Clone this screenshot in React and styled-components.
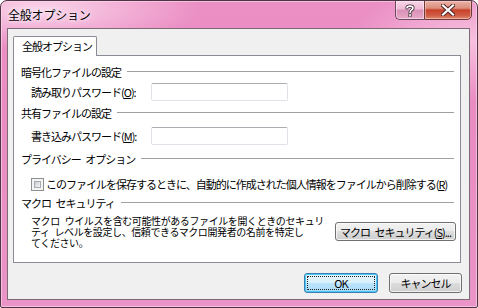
import React from "react";
import styled, { createGlobalStyle } from "styled-components";

const Global = createGlobalStyle`
  html, body { margin: 0; padding: 0; background: #fff; }
  body { font-family: "Noto Sans CJK JP", "Noto Sans", sans-serif; word-spacing: 3px; }
  * { box-sizing: border-box; }
`;

const Window = styled.div`
  width: 478px;
  height: 308px;
  position: relative;
  border: 1px solid #4e3444;
  border-radius: 7px 7px 2px 2px;
  background:
    radial-gradient(ellipse 160px 40px at 40px 8px, rgba(255,235,246,0.75), rgba(255,235,246,0) 100%),
    radial-gradient(ellipse 120px 60px at 470px 40px, rgba(250,205,230,0.8), rgba(250,205,230,0) 100%),
    linear-gradient(180deg, #eb8fc4 0%, #e88cc2 40%, #ea94c7 100%);
  box-shadow: inset 0 0 0 1px rgba(255,220,240,0.6);
  display: flex;
  flex-direction: column;
  overflow: hidden;
`;

const TitleBar = styled.div`
  height: 27px;
  display: flex;
  align-items: flex-start;
  padding-left: 7px;
`;

const Title = styled.div`
  font-size: 12px;
  line-height: 14px;
  margin-top: 7px;
  color: #000;
  letter-spacing: -0.2px;
  text-shadow: 0 0 6px rgba(255,255,255,0.9), 0 0 3px rgba(255,255,255,0.9);
`;

const Caption = styled.div`
  position: absolute;
  top: -1px;
  right: 5px;
  display: flex;
  height: 20px;
`;

const HelpBtn = styled.div`
  width: 29px;
  height: 20px;
  border: 1px solid #6b4a5c;
  border-right: none;
  border-radius: 0 0 0 5px;
  background: linear-gradient(180deg, #f7d5e6 0%, #efb9d5 45%, #d990b6 50%, #e7a9c9 100%);
  box-shadow: inset 0 0 0 1px rgba(255,255,255,0.45);
  display: flex;
  align-items: center;
  justify-content: center;
`;

const CloseBtn = styled.div`
  width: 48px;
  height: 20px;
  border: 1px solid #6b3a3a;
  border-radius: 0 0 5px 0;
  background: linear-gradient(180deg, #eab2a6 0%, #dc8d7c 40%, #c8412a 50%, #cf5c45 80%, #e08a72 100%);
  box-shadow: inset 0 0 0 1px rgba(255,220,210,0.5);
  display: flex;
  align-items: center;
  justify-content: center;
`;

const Client = styled.div`
  flex: 1;
  margin: 0 7px 7px 6px;
  background: #f0f0f0;
  border: 1px solid #7d6a76;
  display: flex;
  flex-direction: column;
  padding: 7px 7px 0 5px;
`;

const TabStrip = styled.div`
  display: flex;
  height: 20px;
  position: relative;
  z-index: 1;
`;

const Tab = styled.div`
  width: 84px;
  height: 20px;
  background: #fff;
  border: 1px solid #898c95;
  border-bottom: none;
  border-radius: 2px 2px 0 0;
  font-size: 11px;
  letter-spacing: -1px;
  line-height: 18px;
  padding-left: 8px;
  color: #000;
`;

const Panel = styled.div`
  width: 448px;
  height: 208px;
  margin-top: -1px;
  background: #fff;
  border: 1px solid #898c95;
  padding: 0 6px 0 7px;
  display: flex;
  flex-direction: column;
`;

const Text = styled.span`
  font-size: 11px;
  letter-spacing: -1px;
  color: #000;
  white-space: nowrap;
`;

const Header = styled.div`
  display: flex;
  align-items: center;
  height: 14px;
  margin-top: ${p => p.$mt}px;
  font-size: 11px;
  letter-spacing: -1px;
  white-space: nowrap;
  &::after {
    content: "";
    flex: 1;
    border-top: 1px solid #a0a0a0;
    margin-left: 6px;
    margin-top: -1px;
  }
`;

const FieldRow = styled.div`
  display: flex;
  align-items: center;
  height: 18px;
  margin-top: ${p => p.$mt}px;
  padding-left: 10px;
`;

const Label = styled(Text)`
  width: 120px;
`;

const Input = styled.div`
  width: 137px;
  height: 18px;
  border: 1px solid #dfe3e9;
  border-top-color: #abadb3;
  border-left-color: #e2e3ea;
  border-radius: 2px;
  background: #fff;
`;

const CheckRow = styled.div`
  display: flex;
  align-items: center;
  height: 14px;
  margin-top: ${p => p.$mt}px;
  padding-left: 10px;
  gap: 2px;
`;

const CheckBox = styled.div`
  width: 13px;
  height: 13px;
  border: 1px solid #8e8f8f;
  background: #f4f4f4;
  padding: 2px;
  & > div {
    width: 100%;
    height: 100%;
    border: 1px solid #a8acb2;
    background: linear-gradient(135deg, #c6cad0 0%, #e3e5e8 60%, #f3f3f3 100%);
  }
`;

const MacroRow = styled.div`
  display: flex;
  align-items: center;
  margin-top: ${p => p.$mt}px;
  padding-left: 10px;
  margin-right: -2px;
`;

const Para = styled.div`
  flex: 1;
  font-size: 10px;
  line-height: 11px;
  letter-spacing: -0.4px;
  white-space: nowrap;
  color: #000;
`;

const Button = styled.div`
  height: ${p => p.$h || 20}px;
  width: ${p => p.$w}px;
  flex-shrink: 0;
  border: 1px solid ${p => (p.$default ? "#3c7fb1" : "#707070")};
  border-radius: 3px;
  background: ${p =>
    p.$default
      ? "linear-gradient(180deg, #eaf6fd 0%, #d9f0fc 48%, #bee6fd 50%, #a7d9f5 100%)"
      : "linear-gradient(180deg, #f2f2f2 0%, #ebebeb 48%, #dddddd 50%, #cfcfcf 100%)"};
  box-shadow: inset 0 0 0 1px ${p => (p.$default ? "#48c8f6" : "rgba(255,255,255,0.7)")};
  display: flex;
  align-items: center;
  justify-content: center;
  position: relative;
  font-size: 11px;
  letter-spacing: -1px;
  color: #000;
  white-space: nowrap;
  ${p =>
    p.$focus
      ? `&::after { content: ""; position: absolute; inset: 2px; border: 1px dotted #222; border-radius: 1px; }`
      : ""}
`;

const Footer = styled.div`
  display: flex;
  justify-content: flex-end;
  gap: 11px;
  margin-top: 10px;
`;

const U = styled.span`
  text-decoration: underline;
  text-underline-offset: 1px;
`;

export default function App() {
  return (
    <>
      <Global />
      <Window>
        <TitleBar>
          <Title>全般オプション</Title>
        </TitleBar>
        <Caption>
          <HelpBtn>
            <svg width="10" height="13" viewBox="0 0 10 13">
              <path
                d="M2 4 C2 1.5 8 1.5 8 4 C8 6 5 6 5 8.5 M5 10.5 L5 12"
                fill="none"
                stroke="#3a2b33"
                strokeWidth="3.2"
                strokeLinecap="round"
              />
              <path
                d="M2 4 C2 1.5 8 1.5 8 4 C8 6 5 6 5 8.5 M5 10.5 L5 12"
                fill="none"
                stroke="#fff"
                strokeWidth="1.6"
                strokeLinecap="round"
              />
            </svg>
          </HelpBtn>
          <CloseBtn>
            <svg width="14" height="12" viewBox="0 0 14 12">
              <path d="M2 1.5 L12 10.5 M12 1.5 L2 10.5" stroke="#4a2020" strokeWidth="4" strokeLinecap="square" />
              <path d="M2 1.5 L12 10.5 M12 1.5 L2 10.5" stroke="#fff" strokeWidth="2.2" strokeLinecap="square" />
            </svg>
          </CloseBtn>
        </Caption>
        <Client>
          <TabStrip>
            <Tab>全般オプション</Tab>
          </TabStrip>
          <Panel>
            <Header $mt={9}>暗号化ファイルの設定</Header>
            <FieldRow $mt={4}>
              <Label>
                読み取りパスワード(<U>O</U>):
              </Label>
              <Input />
            </FieldRow>
            <Header $mt={5}>共有ファイルの設定</Header>
            <FieldRow $mt={7}>
              <Label>
                書き込みパスワード(<U>M</U>):
              </Label>
              <Input />
            </FieldRow>
            <Header $mt={7}>プライバシー オプション</Header>
            <CheckRow $mt={11}>
              <CheckBox>
                <div />
              </CheckBox>
              <Text>
                このファイルを保存するときに、自動的に作成された個人情報をファイルから削除する(<U>R</U>)
              </Text>
            </CheckRow>
            <Header $mt={5}>マクロ セキュリティ</Header>
            <MacroRow $mt={5}>
              <Para>
                マクロ ウイルスを含む可能性があるファイルを開くときのセキュリ
                <br />
                ティ レベルを設定し、信頼できるマクロ開発者の名前を特定し
                <br />
                てください。
              </Para>
              <Button $w={121} $h={19}>
                マクロ セキュリティ(<U>S</U>)...
              </Button>
            </MacroRow>
          </Panel>
          <Footer>
            <Button $w={74} $default $focus>
              OK
            </Button>
            <Button $w={73}>キャンセル</Button>
          </Footer>
        </Client>
      </Window>
    </>
  );
}
